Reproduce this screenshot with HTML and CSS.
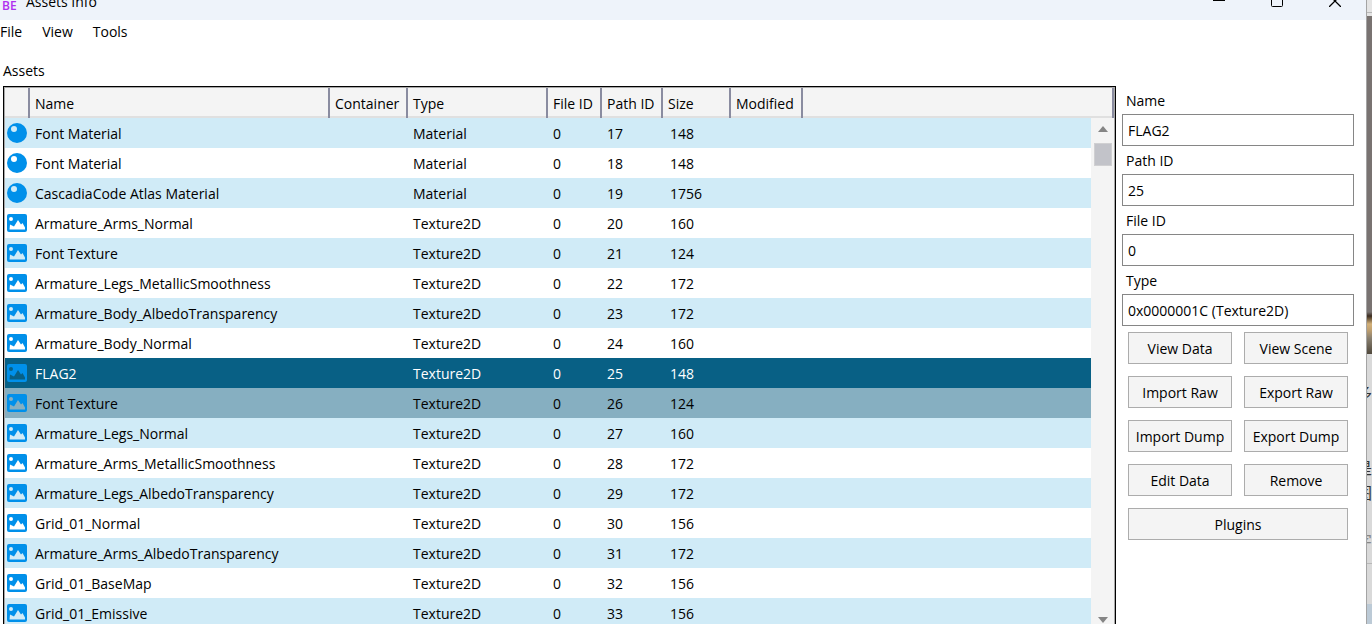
FILE: index.html
```html
<!DOCTYPE html>
<html lang="en">
<head>
  <meta charset="UTF-8">
  <title>Assets Info</title>
  <link rel="stylesheet" href="styles.css">
</head>
<body>

  <svg class="symbols" aria-hidden="true">
    <symbol id="material" viewBox="0 0 20 20">
      <path fill="#0090ea" fill-rule="evenodd" d="M10 0a10 10 0 1 1 0 20a10 10 0 0 1 0-20zM7 3a3 3 0 1 0 0 6a3 3 0 0 0 0-6z"/>
    </symbol>
    <symbol id="texture" viewBox="0 0 20 18">
      <path fill="#0090ea" fill-rule="evenodd" d="M2 0h16a2 2 0 0 1 2 2v14a2 2 0 0 1-2 2H2a2 2 0 0 1-2-2V2a2 2 0 0 1 2-2zM4 3a2 2 0 1 0 0 4a2 2 0 0 0 0-4zM2.500 15.500L3 10.500L7 12.500L11 6L14 10.500L15.500 9L18 13.500L18 15.500z"/>
    </symbol>
  </svg>

  <div class="window">
    <header class="titlebar">
      <span class="logo">BE</span>
      <span class="title">Assets Info</span>
      <button type="button" class="caption" aria-label="Minimize">
        <svg width="12" height="12" viewBox="0 0 12 12"><path d="M0 5.500h12" stroke="#000" fill="none"/></svg>
      </button>
      <button type="button" class="caption" aria-label="Maximize">
        <svg width="12" height="12" viewBox="0 0 12 12"><rect x=".5" y=".5" width="11" height="11" rx="1" stroke="#000" fill="none"/></svg>
      </button>
      <button type="button" class="caption" aria-label="Close">
        <svg width="12" height="12" viewBox="0 0 12 12"><path d="M0 0l12 12M12 0L0 12" stroke="#000" stroke-width="1.300" fill="none"/></svg>
      </button>
    </header>

    <nav class="menu">
      <button type="button">File</button>
      <button type="button">View</button>
      <button type="button">Tools</button>
    </nav>

    <main class="content">
      <section class="assets">
        <h2>Assets</h2>
        <div class="grid">
          <table>
            <colgroup>
              <col class="c-icon"><col class="c-name"><col class="c-container"><col class="c-type">
              <col class="c-file"><col class="c-path"><col class="c-size"><col class="c-modified"><col>
            </colgroup>
            <thead>
              <tr><th></th><th>Name</th><th>Container</th><th>Type</th><th>File ID</th><th>Path ID</th><th>Size</th><th>Modified</th><th></th></tr>
            </thead>
            <tbody>
              <tr><td><svg class="icon"><use href="#material"/></svg></td><td>Font Material</td><td></td><td>Material</td><td>0</td><td>17</td><td>148</td><td></td><td></td></tr>
              <tr><td><svg class="icon"><use href="#material"/></svg></td><td>Font Material</td><td></td><td>Material</td><td>0</td><td>18</td><td>148</td><td></td><td></td></tr>
              <tr><td><svg class="icon"><use href="#material"/></svg></td><td>CascadiaCode Atlas Material</td><td></td><td>Material</td><td>0</td><td>19</td><td>1756</td><td></td><td></td></tr>
              <tr><td><svg class="icon"><use href="#texture"/></svg></td><td>Armature_Arms_Normal</td><td></td><td>Texture2D</td><td>0</td><td>20</td><td>160</td><td></td><td></td></tr>
              <tr><td><svg class="icon"><use href="#texture"/></svg></td><td>Font Texture</td><td></td><td>Texture2D</td><td>0</td><td>21</td><td>124</td><td></td><td></td></tr>
              <tr><td><svg class="icon"><use href="#texture"/></svg></td><td>Armature_Legs_MetallicSmoothness</td><td></td><td>Texture2D</td><td>0</td><td>22</td><td>172</td><td></td><td></td></tr>
              <tr><td><svg class="icon"><use href="#texture"/></svg></td><td>Armature_Body_AlbedoTransparency</td><td></td><td>Texture2D</td><td>0</td><td>23</td><td>172</td><td></td><td></td></tr>
              <tr><td><svg class="icon"><use href="#texture"/></svg></td><td>Armature_Body_Normal</td><td></td><td>Texture2D</td><td>0</td><td>24</td><td>160</td><td></td><td></td></tr>
              <tr class="selected"><td><svg class="icon"><use href="#texture"/></svg></td><td>FLAG2</td><td></td><td>Texture2D</td><td>0</td><td>25</td><td>148</td><td></td><td></td></tr>
              <tr class="hovered"><td><svg class="icon"><use href="#texture"/></svg></td><td>Font Texture</td><td></td><td>Texture2D</td><td>0</td><td>26</td><td>124</td><td></td><td></td></tr>
              <tr><td><svg class="icon"><use href="#texture"/></svg></td><td>Armature_Legs_Normal</td><td></td><td>Texture2D</td><td>0</td><td>27</td><td>160</td><td></td><td></td></tr>
              <tr><td><svg class="icon"><use href="#texture"/></svg></td><td>Armature_Arms_MetallicSmoothness</td><td></td><td>Texture2D</td><td>0</td><td>28</td><td>172</td><td></td><td></td></tr>
              <tr><td><svg class="icon"><use href="#texture"/></svg></td><td>Armature_Legs_AlbedoTransparency</td><td></td><td>Texture2D</td><td>0</td><td>29</td><td>172</td><td></td><td></td></tr>
              <tr><td><svg class="icon"><use href="#texture"/></svg></td><td>Grid_01_Normal</td><td></td><td>Texture2D</td><td>0</td><td>30</td><td>156</td><td></td><td></td></tr>
              <tr><td><svg class="icon"><use href="#texture"/></svg></td><td>Armature_Arms_AlbedoTransparency</td><td></td><td>Texture2D</td><td>0</td><td>31</td><td>172</td><td></td><td></td></tr>
              <tr><td><svg class="icon"><use href="#texture"/></svg></td><td>Grid_01_BaseMap</td><td></td><td>Texture2D</td><td>0</td><td>32</td><td>156</td><td></td><td></td></tr>
              <tr><td><svg class="icon"><use href="#texture"/></svg></td><td>Grid_01_Emissive</td><td></td><td>Texture2D</td><td>0</td><td>33</td><td>156</td><td></td><td></td></tr>
            </tbody>
          </table>
          <div class="scrollbar">
            <svg width="10" height="6" viewBox="0 0 10 6"><path d="M0 6l5-6 5 6z" fill="#858585"/></svg>
            <div class="thumb"></div>
            <svg width="10" height="6" viewBox="0 0 10 6"><path d="M0 0l5 6 5-6z" fill="#858585"/></svg>
          </div>
        </div>
      </section>

      <aside class="details">
        <label for="name">Name</label>
        <input type="text" id="name" value="FLAG2">
        <label for="path-id">Path ID</label>
        <input type="text" id="path-id" value="25">
        <label for="file-id">File ID</label>
        <input type="text" id="file-id" value="0">
        <label for="type">Type</label>
        <input type="text" id="type" value="0x0000001C (Texture2D)">

        <div class="actions">
          <button type="button">View Data</button>
          <button type="button">View Scene</button>
          <button type="button">Import Raw</button>
          <button type="button">Export Raw</button>
          <button type="button">Import Dump</button>
          <button type="button">Export Dump</button>
          <button type="button">Edit Data</button>
          <button type="button">Remove</button>
          <button type="button" class="wide">Plugins</button>
        </div>
      </aside>
    </main>
  </div>

  <!-- sliver of the window behind -->
  <div class="behind">
    <div class="behind-bar"></div>
    <div class="behind-photo"></div>
    <div class="behind-text" lang="zh">
      <p>多</p>
      <p>是</p>
      <p>图</p>
      <p class="muted">字</p>
    </div>
    <div class="behind-foot"></div>
  </div>

</body>
</html>
```
FILE: styles.css
```css
* {
  box-sizing: border-box;
}

body {
  margin: 0;
  height: 100vh;
  display: flex;
  overflow: hidden;
  font-family: "Open Sans", "Noto Sans", sans-serif;
  font-size: 14px;
  line-height: 20px;
  color: #000;
  background: #fff;
}

button, input {
  font: inherit;
  color: inherit;
}

.symbols {
  display: none;
}

.window {
  flex: 1;
  min-width: 0;
  display: flex;
  flex-direction: column;
}

/* title bar, upper part is off screen */
.titlebar {
  display: flex;
  align-items: center;
  height: 36px;
  margin-top: -16px;
  padding-right: 2px;
  flex-shrink: 0;
  background: #eef3fa;
}

.logo {
  width: 16px;
  margin: 8px 8px 0 2px;
  font-size: 12px;
  font-weight: 600;
  line-height: 12px;
  color: #b030f0;
}

.title {
  flex: 1;
}

.caption {
  width: 58px;
  height: 36px;
  padding: 0;
  border: 0;
  background: none;
}

.menu {
  display: flex;
  gap: 20px;
  height: 36px;
  padding-top: 2px;
  flex-shrink: 0;
}

.menu button {
  height: 20px;
  padding: 0;
  border: 0;
  background: none;
}

.content {
  flex: 1;
  min-height: 0;
  display: flex;
}

.assets {
  flex: 1;
  min-width: 0;
  display: flex;
  flex-direction: column;
  padding-left: 3px;
}

.assets h2 {
  margin: 0;
  font-size: 14px;
  font-weight: 400;
  line-height: 30px;
}

.grid {
  position: relative;
  flex: 1;
  min-height: 0;
  overflow: hidden;
  border: 1px solid #000;
  border-bottom: 0;
  box-shadow: inset 0 0 0 1px #a8a8a8;
  padding: 1px 1px 0;
}

table {
  width: 100%;
  table-layout: fixed;
  border-collapse: separate;
  border-spacing: 0;
}

.c-icon { width: 25px; }
.c-name { width: 300px; }
.c-container { width: 78px; }
.c-type { width: 140px; }
.c-file { width: 54px; }
.c-path { width: 61px; }
.c-size { width: 68px; }
.c-modified { width: 72px; }

th, td {
  height: 30px;
  padding: 2px 0 0 5px;
  text-align: left;
  font-weight: 400;
  white-space: nowrap;
}

th {
  background: linear-gradient(#e0e0e0, #e0e0e0) bottom / 100% 2px no-repeat #f4f4f4;
  border-right: 2px solid #8a8ca0;
}

td:first-child {
  padding: 0 0 0 2px;
}

td:nth-child(7) {
  padding-left: 7px;
}

tbody tr:nth-child(odd) {
  background: #d0ebf7;
}

tbody tr.selected {
  color: #fff;
  background: #086085;
}

tbody tr.hovered {
  background: #86afc1;
}

.icon {
  display: block;
  width: 20px;
  height: 20px;
}

.scrollbar {
  position: absolute;
  top: 31px;
  right: 1px;
  bottom: 0;
  width: 23px;
  display: flex;
  flex-direction: column;
  align-items: center;
  padding: 8px 0 1px;
  background: #f4f4f4;
}

.thumb {
  width: 18px;
  height: 23px;
  margin: 11px 0 auto;
  border: 1px solid #d0d0d2;
  background: #c2c3c9;
}

.details {
  width: 250px;
  padding: 0 12px 0 6px;
  margin-top: 30px;
}

.details label {
  display: block;
  padding: 2px 0 0 4px;
  line-height: 26px;
}

.details input {
  display: block;
  width: 100%;
  height: 32px;
  padding: 0 5px;
  border: 1px solid #868686;
  background: #fff;
}

.actions {
  display: grid;
  grid-template-columns: 1fr 1fr;
  gap: 12px;
  padding: 6px;
}

.actions button {
  height: 32px;
  padding: 2px 0 0;
  border: 1px solid #acacac;
  background: #f4f4f4;
}

.actions .wide {
  grid-column: span 2;
}

.behind {
  width: 6px;
  flex-shrink: 0;
  display: flex;
  flex-direction: column;
  overflow: hidden;
  border-left: 1px solid #a4a4a4;
  background: #d9d9d9;
}

.behind-bar {
  height: 16px;
  background: linear-gradient(#b8b8b8, #b8b8b8) 0 12px / 100% 1px no-repeat #e4e4e4;
}

.behind-photo {
  height: 338px;
  background: linear-gradient(#797371 0 296px, #3b2c20 300px, #d3b078 308px, #c0a070 314px, #8a8070 322px, #50483c 338px);
}

.behind-text {
  flex: 1;
  display: flex;
  flex-direction: column;
  align-items: flex-end;
  padding-top: 28px;
  font-family: "Noto Sans CJK SC", sans-serif;
  font-size: 16px;
  color: #333;
}

.behind-text p {
  height: 25px;
  margin: 0;
}

.behind-text p:first-child {
  height: 75px;
}

.behind-text p:nth-child(3) {
  height: 48px;
}

.behind-text .muted {
  color: #888;
}

.behind-foot {
  height: 61px;
  border-top: 1px solid #b8b8b8;
  background: linear-gradient(#d9d9d9 0 40px, #bccad6 40px);
}
```
